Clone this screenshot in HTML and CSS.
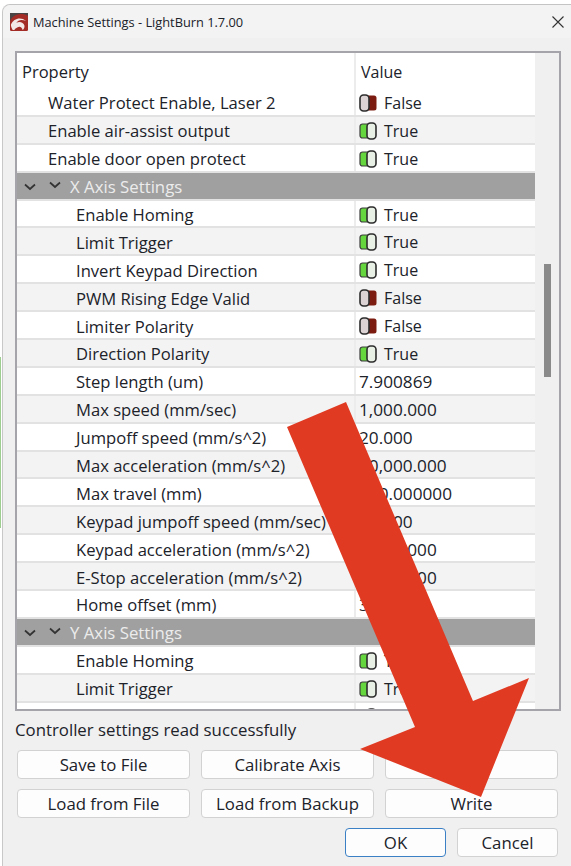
FILE: index.html
```html
<!DOCTYPE html>
<html lang="en">
<head>
  <meta charset="UTF-8" />
  <title>Machine Settings - LightBurn 1.7.00</title>
  <link rel="stylesheet" href="styles.css">
</head>
<body>
  <svg class="defs" width="0" height="0">
    <symbol id="toggle-off" viewBox="0 0 18 18">
      <rect x="6" y="1.5" width="11.5" height="15" rx="2.5" fill="#7c1c10"/>
      <rect x="1" y="1" width="9" height="16" rx="3.5" fill="#dcd4d4" stroke="#2c2c2c" stroke-width="1.6"/>
    </symbol>
    <symbol id="toggle-on" viewBox="0 0 18 18">
      <rect x="1" y="2" width="11" height="14" rx="2.5" fill="#66d63f" stroke="#3c3c3c" stroke-width="1.2"/>
      <rect x="8" y="1" width="9" height="16" rx="3.5" fill="#e8efe4" stroke="#2c2c2c" stroke-width="1.6"/>
    </symbol>
    <symbol id="chevron" viewBox="0 0 12 8">
      <path d="M1 1.5 6 6l5-4.5" fill="none" stroke="#333" stroke-width="1.7"/>
    </symbol>
  </svg>

  <div class="backdrop-labels">
    <span>100</span><span>560</span><span>640</span><span>720</span><span>800</span><span>880</span><span>960</span>
  </div>
  <div class="backdrop-line"></div>

  <div class="window">
    <div class="titlebar">
      <svg class="logo" viewBox="0 0 20 20">
        <rect width="20" height="20" rx="1.5" fill="#a42c26"/>
        <path d="M0 9C3 2 12-1 20 3V0H0z" fill="#4a4444"/>
        <path d="M1 13C4 6 12 4 18 9c-4-2-9-2-11 2 3-2 8-1 9 3 .5 2-.5 4-2 5-.5-3-3-5-6-3-2 1-3 2-3 3H3c-1-2-2-4-2-6z" fill="#f4e8e6"/>
      </svg>
      <span class="title">Machine Settings - LightBurn 1.7.00</span>
      <svg class="close" viewBox="0 0 12 12"><path d="M.5.5l11 11M11.5.5l-11 11" stroke="#333" stroke-width="1.1"/></svg>
    </div>

    <div class="content">
      <div class="frame">
        <div class="table">
          <div class="header">
            <div class="cell-name">Property</div>
            <div class="cell-value">Value</div>
          </div>
          <div class="rows">
            <div class="row"><div class="cell-name lvl1">Water Protect Enable, Laser 2</div><div class="cell-value"><svg class="toggle"><use href="#toggle-off"/></svg>False</div></div>
            <div class="row"><div class="cell-name lvl1">Enable air-assist output</div><div class="cell-value"><svg class="toggle"><use href="#toggle-on"/></svg>True</div></div>
            <div class="row"><div class="cell-name lvl1">Enable door open protect</div><div class="cell-value"><svg class="toggle"><use href="#toggle-on"/></svg>True</div></div>
            <div class="row group"><svg class="chevron"><use href="#chevron"/></svg><svg class="chevron chevron-up"><use href="#chevron"/></svg>X Axis Settings</div>
            <div class="row"><div class="cell-name lvl2">Enable Homing</div><div class="cell-value"><svg class="toggle"><use href="#toggle-on"/></svg>True</div></div>
            <div class="row"><div class="cell-name lvl2">Limit Trigger</div><div class="cell-value"><svg class="toggle"><use href="#toggle-on"/></svg>True</div></div>
            <div class="row"><div class="cell-name lvl2">Invert Keypad Direction</div><div class="cell-value"><svg class="toggle"><use href="#toggle-on"/></svg>True</div></div>
            <div class="row"><div class="cell-name lvl2">PWM Rising Edge Valid</div><div class="cell-value"><svg class="toggle"><use href="#toggle-off"/></svg>False</div></div>
            <div class="row"><div class="cell-name lvl2">Limiter Polarity</div><div class="cell-value"><svg class="toggle"><use href="#toggle-off"/></svg>False</div></div>
            <div class="row"><div class="cell-name lvl2">Direction Polarity</div><div class="cell-value"><svg class="toggle"><use href="#toggle-on"/></svg>True</div></div>
            <div class="row"><div class="cell-name lvl2">Step length (um)</div><div class="cell-value num">7.900869</div></div>
            <div class="row"><div class="cell-name lvl2">Max speed (mm/sec)</div><div class="cell-value num">1,000.000</div></div>
            <div class="row"><div class="cell-name lvl2">Jumpoff speed (mm/s^2)</div><div class="cell-value num">20.000</div></div>
            <div class="row"><div class="cell-name lvl2">Max acceleration (mm/s^2)</div><div class="cell-value num">10,000.000</div></div>
            <div class="row"><div class="cell-name lvl2">Max travel (mm)</div><div class="cell-value num">300.000000</div></div>
            <div class="row"><div class="cell-name lvl2">Keypad jumpoff speed (mm/sec)</div><div class="cell-value num">10.000</div></div>
            <div class="row"><div class="cell-name lvl2">Keypad acceleration (mm/s^2)</div><div class="cell-value num">1,000.000</div></div>
            <div class="row"><div class="cell-name lvl2">E-Stop acceleration (mm/s^2)</div><div class="cell-value num">5,000.000</div></div>
            <div class="row"><div class="cell-name lvl2">Home offset (mm)</div><div class="cell-value num">3.000</div></div>
            <div class="row group"><svg class="chevron"><use href="#chevron"/></svg><svg class="chevron chevron-up"><use href="#chevron"/></svg>Y Axis Settings</div>
            <div class="row"><div class="cell-name lvl2">Enable Homing</div><div class="cell-value"><svg class="toggle"><use href="#toggle-on"/></svg>True</div></div>
            <div class="row"><div class="cell-name lvl2">Limit Trigger</div><div class="cell-value"><svg class="toggle"><use href="#toggle-on"/></svg>True</div></div>
            <div class="row"><div class="cell-name lvl2">Invert Keypad Direction</div><div class="cell-value"><svg class="toggle"><use href="#toggle-on"/></svg>True</div></div>
          </div>
        </div>
        <div class="scrollbar"><div class="thumb"></div></div>
      </div>

      <div class="status">Controller settings read successfully</div>

      <div class="actions">
        <button class="btn">Save to File</button>
        <button class="btn">Calibrate Axis</button>
        <button class="btn">Read</button>
        <button class="btn">Load from File</button>
        <button class="btn">Load from Backup</button>
        <button class="btn">Write</button>
      </div>
      <div class="footer">
        <button class="btn btn-default">OK</button>
        <button class="btn">Cancel</button>
      </div>
    </div>
  </div>

  <svg class="arrow" viewBox="0 0 571 866">
    <polygon points="287,427 346,402 473,701 529,678 481,797 360,749 415,727" fill="#e03a22"/>
  </svg>
</body>
</html>
```

FILE: styles.css
```css
* {
  box-sizing: border-box;
}
html, body {
  height: 100%;
}
body {
  margin: 0;
  position: relative;
  overflow: hidden;
  background: #fff;
  color: #20222a;
  font-family: "Open Sans", "Noto Sans", sans-serif;
  font-size: 16.6px;
}

.defs {
  position: absolute;
}

.backdrop-labels {
  display: flex;
  align-items: flex-end;
  height: 4px;
  padding-left: 15px;
  gap: 53px;
  overflow: hidden;
  color: #999;
  font-size: 14px;
}

.backdrop-line {
  position: absolute;
  left: 0;
  top: 357px;
  width: 1px;
  height: 171px;
  background: #9ecf90;
}

.window {
  margin-left: 2px;
  height: 862px;
  border-top: 1px solid #c4c4c4;
  border-left: 1px solid #c8c8c8;
  border-top-left-radius: 8px;
  background: #f0f0f0;
}

.titlebar {
  display: flex;
  align-items: center;
  height: 33px;
  padding: 0 7px;
  background: #f3f3f3;
  border-top-left-radius: 8px;
}
.logo {
  width: 18px;
  height: 18px;
}
.title {
  margin-left: 5px;
  font-size: 12.8px;
}
.close {
  width: 12px;
  height: 12px;
  margin-left: auto;
}

.content {
  padding: 13px 0 0 12px;
}

.frame {
  display: flex;
  width: 546px;
  height: 660px;
  border: 2px solid #a4a4aa;
  background: #f0f0f0;
}

.table {
  width: 518px;
  overflow: hidden;
  background: #fff;
}

.header {
  display: grid;
  grid-template-columns: 337px 1fr;
  height: 36px;
  font-size: 16.5px;
}
.header .cell-name {
  padding: 0 0 0 5px;
}
.header .cell-value {
  padding: 1px 0 0 5px;
  border-left: 2px solid #ececec;
}

.rows {
  display: grid;
  grid-auto-rows: 27.9px;
}
.row {
  display: grid;
  grid-template-columns: 337px 1fr;
  border-bottom: 2px solid #e2e2e2;
  background: #fff;
}
.row:nth-child(even) {
  background: #f3f3f3;
}
.row.group,
.row.group:nth-child(even) {
  display: flex;
  align-items: center;
  padding: 2px 0 0 7px;
  background: #a0a0a0;
  color: #ececec;
  font-size: 16.8px;
}

.cell-name {
  display: flex;
  align-items: center;
  padding-top: 2px;
  white-space: nowrap;
}
.lvl1 {
  padding-left: 31px;
}
.lvl2 {
  padding-left: 59px;
}
.cell-value {
  display: flex;
  align-items: center;
  height: 100%;
  padding: 2px 0 0 3px;
  border-left: 2px solid #ececec;
  font-size: 16px;
}
.cell-value.num {
  font-size: 17.2px;
}

.chevron {
  width: 12px;
  height: 8px;
  margin-right: 13px;
}
.chevron-up {
  margin: 0 9px 4px 0;
}

.toggle {
  width: 18px;
  height: 18px;
  margin-right: 7px;
}

.scrollbar {
  flex: 1;
  padding: 211px 8px 0 9px;
}
.thumb {
  height: 113px;
  background: #8a8a8a;
}

.status {
  margin-top: 10px;
  line-height: 18px;
  font-size: 16.8px;
}

.actions {
  display: grid;
  grid-template-columns: repeat(3, 173px);
  grid-auto-rows: 29px;
  gap: 10px 11px;
  margin: 11px 0 0 2px;
}

.footer {
  display: flex;
  justify-content: flex-end;
  gap: 11px;
  width: 543px;
  margin-top: 10px;
}
.footer .btn {
  width: 101px;
  height: 29px;
}

.btn {
  padding: 0;
  background: #fdfdfd;
  border: 1px solid #d2d2d2;
  border-radius: 4px;
  color: inherit;
  font-family: inherit;
  font-size: 16.8px;
}
.btn-default {
  border: 1.5px solid #3b7fc4;
}

.arrow {
  position: absolute;
  left: 0;
  top: 0;
  width: 571px;
  height: 866px;
}
```
